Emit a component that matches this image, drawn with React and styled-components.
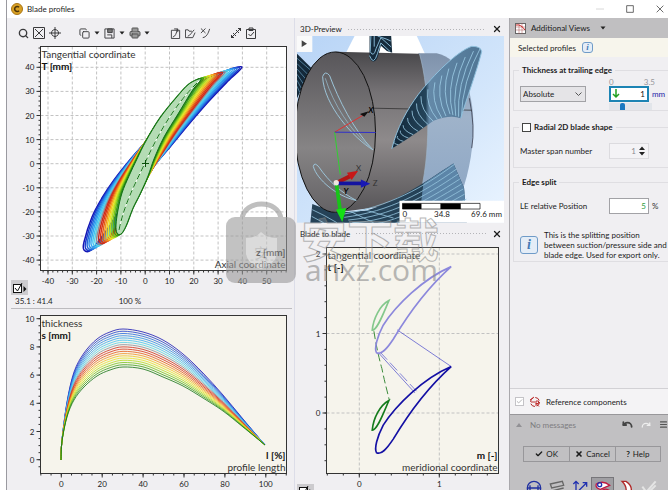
import { useState } from 'react'
import styled, { createGlobalStyle, css } from 'styled-components'
import { Search, Copy, Printer, Check, X, Undo, Redo, Menu } from 'lucide-react'

const GlobalStyle = createGlobalStyle`
  * {
    box-sizing: border-box;
  }
  body {
    margin: 0;
    background: #fff;
    color: #1c1c1c;
    font: 8px/10px Lato, "Open Sans", sans-serif;
  }
  button, input, select {
    font: inherit;
    color: inherit;
    margin: 0;
  }
  svg {
    display: block;
  }
`

/* ---------- window ---------- */

const Window = styled.div`
  position: relative;
  display: flex;
  flex-direction: column;
  height: 100vh;
  margin-left: 6px;
  overflow: hidden;
  border-left: 1px solid #9a9aa0;
`
const TitleBar = styled.header`
  display: flex;
  flex: none;
  align-items: center;
  gap: 4px;
  height: 18px;
  padding: 0 2px 0 4px;
`
const Title = styled.h1`
  flex: 1;
  margin: 0;
  font-size: 8px;
  font-weight: 400;
`
const CaptionButton = styled.button`
  display: grid;
  place-items: center;
  width: 12px;
  height: 16px;
  margin-left: 14px;
  padding: 0;
  border: 0;
  background: none;
  color: ${(p) => (p.$dim ? '#c4c4c4' : '#222')};
`
const Body = styled.main`
  display: grid;
  flex: 1;
  grid-template-columns: minmax(0, 287fr) minmax(0, 215fr) 159px;
  min-height: 0;
  background: #f0eff2;
`
const Column = styled.section`
  min-width: 0;
`
const ViewColumn = styled(Column)`
  padding: 0 5px 0 2px;
  border-left: 1px solid #dcdde8;
`

/* ---------- toolbar ---------- */

const Toolbar = styled.div`
  display: flex;
  align-items: center;
  gap: 15px;
  height: 24px;
  padding: 6px 0 0 8px;
`
const ToolGroup = styled.div`
  display: flex;
`
const Tool = styled.button`
  display: grid;
  place-items: center;
  width: ${(p) => p.$width || 15}px;
  height: 16px;
  padding: 0;
  border: 0;
  background: none;
  color: #3a3a3c;
`
const ChartArea = styled.div`
  position: relative;
`
const ChartSvg = styled.svg`
  width: 100%;
  height: auto;
  font-family: Lato, "Open Sans", sans-serif;
`
const ChartOptions = styled.button`
  position: absolute;
  left: ${(p) => p.$left}px;
  bottom: ${(p) => p.$bottom}px;
  display: grid;
  place-items: center;
  width: 17px;
  height: 15px;
  padding: 0;
  border: 0;
  background: #cccbce;
`
const Status = styled.div`
  display: flex;
  gap: 66px;
  height: 14px;
  margin: 0 2px 0 4px;
  padding: 1px 0 0 4px;
  border-bottom: 1px solid #bcbbbf;
`
const PanelHeader = styled.div`
  display: flex;
  align-items: center;
  gap: 5px;
  height: 18px;
  padding: 4px 2px 0 3px;
`
const Grip = styled.span`
  flex: 1;
  height: 3px;
  background: radial-gradient(circle, #b4b4b8 1px, transparent 1px) 0 0 / 3px 3px;
`
const CloseButton = styled.button`
  display: grid;
  place-items: center;
  width: 11px;
  height: 12px;
  padding: 0;
  border: 0;
  background: none;
`

/* ---------- side panel ---------- */

const Side = styled.aside`
  display: flex;
  flex-direction: column;
  min-height: 0;
  border-left: 1px solid #a9a8ac;
`
const SideHeader = styled.div`
  display: flex;
  flex: none;
  align-items: center;
  gap: 5px;
  height: 20px;
  padding-left: 4px;
  background: #c0bfc1;
`
const Selected = styled.div`
  display: flex;
  flex: none;
  align-items: center;
  gap: 6px;
  height: 19px;
  padding-left: 8px;
  background: #f7f5ec;
`
const Group = styled.fieldset`
  min-width: 0;
  height: ${(p) => p.$height}px;
  margin: ${(p) => p.$top}px 0 0 3px;
  padding: 0 0 0 6px;
  border: 1px solid #dfdee2;
  border-right: 0;
`
const Legend = styled.legend`
  display: flex;
  align-items: center;
  gap: 3px;
  height: 10px;
  margin-left: -1px;
  padding: 0 3px;
  font-weight: 700;
`
const Field = styled.div`
  display: flex;
  align-items: center;
  gap: 3px;
  height: 17px;
  margin-top: ${(p) => p.$top || 0}px;
`
const FieldLabel = styled.label`
  width: 86px;
`
const box = css`
  height: 16px;
  border: 1px solid #a2a2a6;
  border-radius: 0;
  background: #fff;
`
const NumberBox = styled.input`
  ${box}
  width: 40px;
  padding: 0 2px;
  text-align: right;
  color: ${(p) => p.$color || '#111'};
  ${(p) => p.$focused && 'border: 2px solid #1c84b4;'}
  ${(p) => p.$plain && 'border-color: #dcdbdf; background: #f4f3f6; padding-right: 12px;'}
  outline: 0;
`
const Thickness = styled.div`
  display: grid;
  grid-template-columns: 66px 44px 1fr;
  column-gap: 23px;
  margin-top: 3px;
`
const SelectBox = styled.div`
  position: relative;
  margin-top: 8px;
  svg {
    position: absolute;
    top: 6px;
    right: 4px;
  }
`
const Select = styled.select`
  ${box}
  width: 100%;
  padding: 0 2px;
  appearance: none;
  background: #e5e4e7;
`
const Gauge = styled.div`
  display: flex;
  flex-direction: column;
`
const Scale = styled.div`
  display: flex;
  justify-content: space-between;
  width: 46px;
  height: 8px;
  line-height: 8px;
  color: #98979b;
`
const Entry = styled.div`
  position: relative;
  display: flex;
  align-items: center;
  gap: 3px;
  > svg {
    position: absolute;
    top: 3px;
    left: 3px;
  }
`
const Unit = styled.span`
  color: ${(p) => p.$color || '#333'};
`
const Slider = styled.input`
  width: 43px;
  height: 7px;
  margin-top: 1px;
  appearance: none;
  background: #e2e5ea;
  &::-webkit-slider-thumb {
    appearance: none;
    width: 5px;
    height: 7px;
    border-radius: 2px 2px 0 0;
    background: #1a78c0;
  }
`
const Spin = styled.div`
  position: relative;
  svg {
    position: absolute;
    top: 3px;
    right: 4px;
  }
`
const Tick = styled.input`
  appearance: none;
  width: 9px;
  height: 9px;
  border: 1px solid ${(p) => (p.disabled ? '#c4c3c7' : '#444')};
  background: #fff;
`
const LockedTick = styled.span`
  display: grid;
  > * {
    grid-area: 1 / 1;
    place-self: center;
  }
  svg {
    pointer-events: none;
  }
`
const Hint = styled.div`
  display: flex;
  align-items: center;
  gap: 6px;
  margin: 16px 0 0;
  p {
    margin: 0;
    white-space: nowrap;
  }
`
const InfoBadge = styled.span`
  display: grid;
  flex: none;
  place-items: center;
  width: ${(p) => p.$size}px;
  height: ${(p) => p.$size}px;
  border: 1px solid #6f9bc8;
  border-radius: 3px;
  background: #e4edf7;
  color: #4479b4;
  font: italic 700 ${(p) => (p.$size > 12 ? 14 : 9)}px/1 "Liberation Serif", serif;
`
const Reference = styled.label`
  display: flex;
  flex: none;
  align-items: center;
  gap: 5px;
  height: 26px;
  margin-top: auto;
  padding-left: 5px;
  border-top: 1px solid #d2d1d5;
  background: #f4f3f5;
`
const Footer = styled.footer`
  flex: none;
  height: 76px;
  overflow: hidden;
  border-top: 1px solid #98979a;
  background: #c1c0c2;
`
const Messages = styled.div`
  display: flex;
  align-items: center;
  gap: 8px;
  height: 19px;
  padding-left: 6px;
  color: #7d7c7f;
  span {
    flex: 1;
  }
`
const Actions = styled.div`
  display: grid;
  grid-template-columns: 1fr 1fr 1fr;
  margin: 12px 7px 0 13px;
  border: 1px solid #98979a;
`
const Action = styled.button`
  display: flex;
  align-items: center;
  justify-content: center;
  gap: 3px;
  height: 14px;
  padding: 0;
  border: 0;
  background: none;
  & + & {
    border-left: 1px solid #98979a;
  }
`
const Steps = styled.div`
  display: flex;
  margin: 15px 0 0 12px;
`
const Step = styled.button`
  display: grid;
  flex: none;
  place-items: center;
  width: 23px;
  height: 22px;
  padding: 0;
  border: ${(p) => (p.$active ? '1px solid #77767a' : '0')};
  background: ${(p) => (p.$active ? '#a09fa3' : 'none')};
`

/* ---------- overlay mark ---------- */

const Watermark = styled.svg`
  position: absolute;
  top: 200px;
  left: 217px;
  width: 220px;
  height: 90px;
  pointer-events: none;
`

/* ---------- curve helpers ---------- */

const smooth = (pts, closed) => {
  const n = pts.length
  const at = (i) => (closed ? pts[(i + n) % n] : pts[Math.max(0, Math.min(n - 1, i))])
  let d = `M${pts[0]}`
  const last = closed ? n : n - 1
  for (let i = 0; i < last; i++) {
    const [a, b, c, e] = [at(i - 1), at(i), at(i + 1), at(i + 2)]
    d += `C${b[0] + (c[0] - a[0]) / 6},${b[1] + (c[1] - a[1]) / 6} ${c[0] - (e[0] - b[0]) / 6},${c[1] - (e[1] - b[1]) / 6} ${c}`
  }
  return closed ? d + 'Z' : d
}

const blend = (from, to, t) => from.map(([x, y], i) => [x + (to[i][0] - x) * t, y + (to[i][1] - y) * t])

// point on a polyline for t in 0..1
const pointAt = (pts, t) => {
  const pos = t * (pts.length - 1)
  const i = Math.min(pts.length - 2, Math.floor(pos))
  const f = pos - i
  return [pts[i][0] + (pts[i + 1][0] - pts[i][0]) * f, pts[i][1] + (pts[i + 1][1] - pts[i][1]) * f]
}

const range = (from, to, step = 1) => {
  const list = []
  for (let v = from; v <= to + step / 100; v += step) list.push(v)
  return list
}

const COLORS = [
  '#1414b4', '#1c3ccc', '#2468dc', '#2c8ce8', '#34a8f0', '#44c4f0', '#58d0e4',
  '#8c8c98', '#cc2c1c', '#d83418', '#e45c18', '#f09020', '#f0c420', '#e4e428',
  '#b4dc20', '#78c41c', '#3c9c18', '#147414',
]

// outlines start at the leading edge and run up the suction side
const TIP_BLADE = [
  [84, 250], [84, 242], [92, 217], [102, 198], [114, 180], [129, 161], [144, 144], [172, 113],
  [203, 86], [224, 72], [242, 67], [228, 81], [209, 101], [189, 124], [170, 147], [156, 163],
  [143, 180], [124, 204], [104, 234], [91, 250],
]
const HUB_BLADE = [
  [117, 233], [116, 225], [118, 210], [122, 193], [129, 176], [137, 159], [146, 141], [160, 118],
  [176, 98], [189, 84], [201, 79], [192, 91], [178, 114], [164, 137], [154, 159], [148, 176],
  [140, 194], [133, 208], [126, 226], [121, 234],
]
const THICK_MAX = [
  [61, 460], [62, 440], [67, 402], [74, 372], [84, 353], [97, 339], [110, 332], [123, 329],
  [143, 332], [163, 340], [183, 354], [203, 373], [223, 395], [243, 419], [265, 445],
]
const THICK_MIN = [
  [61, 460], [62, 441], [67, 417], [74, 400], [84, 387], [97, 376], [110, 370], [123, 367],
  [143, 369], [163, 377], [183, 386], [203, 398], [223, 411], [243, 427], [265, 445],
]

/* ---------- charts ---------- */

function Axes({ frame, xs, ys, minorX = [], minorY = [], grid, fill }) {
  const [x0, y0, x1, y1] = frame
  return (
    <g fontSize="8" fill="#222">
      <rect x={x0} y={y0} width={x1 - x0} height={y1 - y0} fill={fill} />
      {grid && (
        <g stroke="#c2c2c2" strokeDasharray="3 2">
          {xs.map(([x]) => <path key={x} d={`M${x} ${y0}V${y1}`} />)}
          {ys.map(([y]) => <path key={y} d={`M${x0} ${y}H${x1}`} />)}
        </g>
      )}
      <g stroke="#333">
        {xs.map(([x]) => <path key={x} d={`M${x} ${y1}v4`} />)}
        {ys.map(([y]) => <path key={y} d={`M${x0} ${y}h-4`} />)}
        {minorX.map((x) => <path key={x} d={`M${x} ${y1}v2`} />)}
        {minorY.map((y) => <path key={y} d={`M${x0} ${y}h-2`} />)}
        <rect x={x0} y={y0} width={x1 - x0} height={y1 - y0} fill="none" />
      </g>
      {xs.map(([x, label]) => <text key={x} x={x} y={y1 + 13} textAnchor="middle">{label}</text>)}
      {ys.map(([y, label]) => <text key={y} x={x0 - 6} y={y + 3} textAnchor="end">{label}</text>)}
    </g>
  )
}

function AxisTitles({ frame, yName, yUnit, xName, xUnit }) {
  const [x0, y0, x1, y1] = frame
  return (
    <g fontSize="10" fill="#333">
      <text x={x0 + 1} y={y0 + 11}>{yName}</text>
      <text x={x0 + 1} y={y0 + 23} fontWeight="700" fill="#111">{yUnit}</text>
      <text x={x1 - 1} y={y1 - 15} fontWeight="700" fill="#111" textAnchor="end">{xUnit}</text>
      <text x={x1 - 1} y={y1 - 3} textAnchor="end">{xName}</text>
    </g>
  )
}

function ProfileChart() {
  const frame = [40.5, 46.5, 286.5, 270.5]
  const camber = 'M119 230C124 205 134 186 145 163C158 134 175 104 199 81'
  const x = (v) => 145.2 + v * 2.43
  const y = (v) => 163.7 - v * 2.41
  return (
    <ChartSvg viewBox="7 42 287 253">
      <Axes
        frame={frame}
        grid
        fill="#fff"
        xs={range(-40, 50, 10).map((v) => [x(v), v])}
        ys={range(-40, 40, 10).map((v) => [y(v), v])}
        minorX={range(-42, 58, 2).map(x)}
        minorY={range(-42, 48, 2).map(y)}
      />
      <g fill="none" strokeWidth="1.500">
        {COLORS.map((c, i) => (
          <path key={c} d={smooth(blend(TIP_BLADE, HUB_BLADE, i / (COLORS.length - 1)), true)} stroke={c} />
        ))}
      </g>
      <path d={smooth(HUB_BLADE, true)} fill="#b4dcb4" stroke="#147414" />
      <path d={camber} fill="none" stroke="#fff" />
      <path d={camber} fill="none" stroke="#147414" strokeDasharray="6 3" />
      <path d="M142 163.500h7M145.500 160v7" stroke="#0a500a" />
      <AxisTitles frame={frame} yName="Tangential coordinate" yUnit="T [mm]" xName="Axial coordinate" xUnit="z [mm]" />
    </ChartSvg>
  )
}

function ThicknessChart() {
  const frame = [40.5, 315.5, 286.5, 473.5]
  const x = (v) => 61.3 + v * 2.045
  const y = (v) => 459.7 - v * 14.1
  return (
    <ChartSvg viewBox="7 309 287 181">
      <Axes
        frame={frame}
        fill="#f6f4ec"
        xs={range(0, 100, 20).map((v) => [x(v), v])}
        ys={range(0, 10, 2).map((v) => [y(v), v])}
        minorX={range(-10, 110, 5).map(x)}
        minorY={range(-0.5, 10, 0.5).map(y)}
      />
      <g fill="none" strokeWidth="0.800">
        {COLORS.map((c, i) => (
          <path key={c} d={smooth(blend(THICK_MAX, THICK_MIN, i / (COLORS.length - 1)))} stroke={c} />
        ))}
      </g>
      <AxisTitles frame={frame} yName="thickness" yUnit="s [mm]" xName="profile length" xUnit="l [%]" />
    </ChartSvg>
  )
}

const TIP_OUTLINE = 'M484 434C400 470 318 550 280 610C262 645 252 680 260 693C274 700 290 682 310 652C350 585 410 500 484 434Z'
const HUB_OUTLINE = 'M297 536C270 550 250 590 247 625C262 625 280 575 297 536Z'

function BladeToBladeChart() {
  const frame = [326.5, 247.5, 498.5, 473.5]
  const x = (v) => 359.3 + v * 80
  const y = (v) => 413 - v * 79.5
  return (
    <ChartSvg viewBox="297 241 207 249">
      <Axes
        frame={frame}
        grid
        fill="#f6f4ec"
        xs={[0, 1].map((v) => [x(v), v])}
        ys={[0, 1, 2].map((v) => [y(v), v])}
        minorX={range(-0.4, 1.6, 0.2).map(x)}
        minorY={range(-0.6, 2, 0.2).map(y)}
      />
      <g transform="translate(290 222) scale(.333)" fill="none" strokeWidth="3">
        <path d="M322 324L484 434M265 392L375 513" stroke="#4040c8" strokeWidth="2" />
        <path d="M270 390L380 508" stroke="#4a4acc" strokeWidth="2" strokeDasharray="32 12" />
        <path d="M252 328C258 370 270 420 276 440C284 480 290 500 298 534" stroke="#3c8c3c" strokeDasharray="24 10" />
        <path d={TIP_OUTLINE} stroke="#8c88dc" strokeWidth="5" transform="translate(0 -300)" />
        <path d={HUB_OUTLINE} stroke="#84c88c" strokeWidth="5" transform="translate(0 -300)" />
        <path d={TIP_OUTLINE} stroke="#1410a4" strokeWidth="5" />
        <path d={HUB_OUTLINE} stroke="#147c1c" strokeWidth="5" />
      </g>
      <AxisTitles frame={frame} yName="tangential coordinate" yUnit="t [-]" xName="meridional coordinate" xUnit="m [-]" />
    </ChartSvg>
  )
}

function Preview3D() {
  const upper = [[305, 400], [330, 335], [375, 248], [450, 165], [540, 95]]
  const lower = [[312, 400], [370, 360], [430, 320], [480, 298], [514, 308]]
  return (
    <ChartSvg viewBox="20 63 622 561" role="img" aria-label="Impeller preview">
      <defs>
        <linearGradient id="sky" x1="0" y1="0" x2="1" y2="1">
          <stop offset="0" stopColor="#b8d4f6" />
          <stop offset="0.600" stopColor="#d3e6fb" />
          <stop offset="1" stopColor="#eaf4ff" />
        </linearGradient>
        <linearGradient id="drum" x1="0" y1="0" x2="0" y2="1">
          <stop offset="0" stopColor="#48474a" />
          <stop offset="0.250" stopColor="#757275" />
          <stop offset="0.550" stopColor="#8e8a8b" />
          <stop offset="1" stopColor="#565457" />
        </linearGradient>
        <linearGradient id="face" x1="0" y1="0" x2="0" y2="1">
          <stop offset="0" stopColor="#58565a" />
          <stop offset="0.600" stopColor="#868485" />
          <stop offset="1" stopColor="#646265" />
        </linearGradient>
        <linearGradient id="glass" x1="0" y1="0" x2="0" y2="1">
          <stop offset="0" stopColor="#7f92ab" />
          <stop offset="0.400" stopColor="#9fb3ca" />
          <stop offset="1" stopColor="#8ba5c4" />
        </linearGradient>
        <linearGradient id="blade" x1="0" y1="0" x2="1" y2="0">
          <stop offset="0.100" stopColor="#152c3e" />
          <stop offset="0.380" stopColor="#24445a" />
          <stop offset="0.420" stopColor="#6489a8" />
          <stop offset="1" stopColor="#4f7594" />
        </linearGradient>
        <clipPath id="bladeClip">
          <path d="M305 402C320 340 350 285 385 238C430 180 500 110 545 94Q573 94 575 110C560 170 530 250 512 310Q480 298 430 318C385 350 350 375 305 402Z" />
        </clipPath>
      </defs>
      <rect x="20" y="63" width="622" height="561" fill="url(#sky)" />
      <path d="M193 63H380L405 118H165Z" fill="#fff" />
      <path d="M20 116L64 160L20 250Z" fill="#14293a" />
      <path d="M20 130L60 165M20 146L52 178M20 162L46 192M20 178L40 208M20 196L34 222M20 214L28 232" stroke="#6ea4c6" strokeWidth="2" />

      <path d="M385 115H440C510 130 550 220 550 330C550 420 530 500 505 560L380 590Z" fill="url(#glass)" />
      <path d="M538 250Q556 340 545 400" fill="none" stroke="#223" strokeWidth="2" />
      <path d="M135 110L388 116C420 230 424 420 385 560L135 594Z" fill="url(#drum)" />
      <path d="M250 280L545 286" stroke="#222" strokeWidth="2" />
      <path d="M388 116C420 230 424 420 385 560" fill="none" stroke="#9fb6cc" strokeWidth="2" />

      <path d="M60 624L66 568L135 594L225 588C310 566 400 505 490 446L522 520L530 624Z" fill="#254257" />
      <path d="M400 506L490 446L522 520L530 624H385Z" fill="#5c85a8" />
      <g stroke="#94c2dc" strokeWidth="2.500" fill="none">
        {range(0, 8).map((i) => (
          <path key={i} d={`M${150 + i * 12} ${600 + i * 8}C300 ${575 + i * 15} 400 ${518 + i * 15} ${494 + i * 5} ${448 + i * 15}`} />
        ))}
        <path d="M66 585Q100 600 140 624M64 605L100 624M180 590L250 624M225 586L310 610" />
      </g>

      <ellipse cx="135" cy="352" rx="121" ry="241" fill="url(#face)" stroke="#111" strokeWidth="3" />
      <g fill="none" stroke="#9cc4d8" strokeWidth="3">
        <path d="M97 185Q104 165 118 182C145 255 190 345 248 405C190 370 100 270 97 185Z" />
        <path d="M105 190C130 270 180 345 238 396" strokeWidth="2" />
        <path d="M198 557C140 545 80 495 69 455Q72 440 86 457C115 500 155 535 198 557Z" />
      </g>

      <path d="M238 63H303L306 113L290 108L272 92L262 128Q250 150 238 130Z" fill="#152b3c" />
      <path d="M238 122Q250 155 262 115L272 84L300 110M242 63L240 110Q250 130 258 100L272 68L303 96M252 63V95M262 63L288 72L302 78" fill="none" stroke="#82b4d0" strokeWidth="3" />

      <g clipPath="url(#bladeClip)">
        <rect x="300" y="90" width="280" height="320" fill="url(#blade)" />
        <g stroke="#9ccbe4" strokeWidth="2.500" fill="none">
          {range(0, 16).map((i) => {
            const t = i / 16
            const [a, b] = [pointAt(upper, t), pointAt(lower, t)]
            return <path key={i} d={`M${b}Q${(a[0] + b[0]) / 2 - 12} ${(a[1] + b[1]) / 2} ${a[0] + 35 * t} ${a[1] - 4}`} />
          })}
        </g>
      </g>
      <path d="M305 402C320 340 350 285 385 238C430 180 500 110 545 94Q573 94 575 110C560 170 530 250 512 310" fill="none" stroke="#8fc0dc" strokeWidth="3" />

      <path d="M133 352L222 299" stroke="#e03030" strokeWidth="3" />
      <path d="M133 352L256 353" stroke="#3030c8" strokeWidth="3" />
      <path d="M133 352L150 480" stroke="#30d030" strokeWidth="3" />
      <path d="M214 298L230 293L222 303Z" fill="#111" stroke="#111" strokeWidth="4" />
      <path d="M138 505L180 484" stroke="#b01414" strokeWidth="12" />
      <path d="M170 474L204 468L184 496Z" fill="#c81818" />
      <path d="M140 506H214" stroke="#1414a0" strokeWidth="11" />
      <path d="M212 494L240 507L212 519Z" fill="#1818b4" />
      <path d="M139 510L150 590" stroke="#18c418" strokeWidth="11" />
      <path d="M137 584L168 580L156 622Z" fill="#14e014" />
      <circle cx="138" cy="504" r="8" fill="#eee4e0" />
      <g fontSize="24" fill="#333">
        <text x="197" y="470">X</text>
        <text x="248" y="514">Z</text>
        <text x="234" y="293" fontWeight="700" fontStyle="italic" fill="#000">X</text>
        <text x="160" y="538" fontWeight="700" fontStyle="italic" fill="#000">Y</text>
      </g>

      <rect x="20" y="63" width="46" height="48" fill="#fafafa" />
      <path d="M34 76L50 86L34 96Z" fill="#444" />
      <path d="M328 558H642V624H328Z" fill="#fff" />
      <path d="M337 566H570V583H337Z" fill="#fff" stroke="#000" strokeWidth="2" />
      <path d="M337 566h57v17h-57zM451 566h61v17h-61z" />
      <g fontSize="24" fill="#222">
        <text x="337" y="606">0</text>
        <text x="432" y="606">34.8</text>
        <text x="636" y="606" textAnchor="end">69.6 mm</text>
      </g>
    </ChartSvg>
  )
}

/* ---------- small icons ---------- */

const Icon = ({ d, size = 12, children }) => (
  <svg width={size} height={size} viewBox="0 0 12 12" fill="none" stroke="currentColor">
    {d && <path d={d} />}
    {children}
  </svg>
)

const Caret = () => (
  <svg width="6" height="4" viewBox="0 0 6 4"><path d="M0.500 0.500H5.500L3 3.500Z" fill="#222" /></svg>
)

const OptionsIcon = () => (
  <svg width="14" height="12" viewBox="0 0 14 12" fill="none" stroke="#111">
    <rect x="0.500" y="2.500" width="8" height="8" fill="#fff" />
    <path d="M2 6L4.500 9L9 1" />
    <path d="M10.500 4L13.500 7L10.500 10Z" fill="#111" stroke="none" />
  </svg>
)

const Close = () => <X size={10} strokeWidth={3} />

function ProfileToolbar() {
  return (
    <Toolbar>
      <ToolGroup>
        <Tool $width={16} aria-label="Zoom"><Search size={11} strokeWidth={3} /></Tool>
        <Tool $width={16} aria-label="Fit view"><Icon d="M.5.5h11v11H.5ZM2 2l8 8M10 2L2 10" /></Tool>
        <Tool $width={16} aria-label="Center"><Icon d="M6 0v12M0 6h12M6 2.500a3.500 3.500 0 1 0 .01 0" /></Tool>
      </ToolGroup>
      <ToolGroup>
        <Tool $width={13} aria-label="Copy"><Copy size={11} /></Tool>
        <Tool $width={12} aria-label="Copy options"><Caret /></Tool>
        <Tool $width={13} aria-label="Save"><Icon size={11} d="M1 1h10v10H1ZM3.500 7.500h5V11"><path d="M4 1h5v4H4Z" fill="#777" /></Icon></Tool>
        <Tool $width={12} aria-label="Save options"><Caret /></Tool>
        <Tool $width={13} aria-label="Print"><Printer size={12} strokeWidth={2} color="#555" fill="#999" /></Tool>
        <Tool $width={12} aria-label="Print options"><Caret /></Tool>
      </ToolGroup>
      <ToolGroup>
        <Tool aria-label="New polyline"><Icon size={11} d="M1.500 2.500h9v9h-9ZM3 10C6 9 7 6 8 1M4.500 1h4v3.500" /></Tool>
        <Tool aria-label="Open polyline"><Icon size={11} d="M.5 10.500V2h3l1 1.500h3M.5 10.500h8L11 5M3 9C6 8 7 5 10 2" /></Tool>
        <Tool aria-label="Remove polyline"><Icon size={11} d="M1 .5l5 5M6 .5l-5 5M3 10.500C7 10 9 6 10.500 1" /></Tool>
      </ToolGroup>
      <ToolGroup>
        <Tool aria-label="Measure"><Icon d="M1 11L11 1M3 6l3 3M6 3l3 3M8 1.500h2.500V4M1.500 8v2.500H4" /></Tool>
        <Tool aria-label="Report"><Icon d="M1.500 2.500h9v9h-9ZM4 1h4v2.500H4ZM3.500 7l2 2L9 5" /></Tool>
      </ToolGroup>
    </Toolbar>
  )
}

function SidePanel() {
  const [mode, setMode] = useState('Absolute')
  const [thickness, setThickness] = useState('1')
  const [radial, setRadial] = useState(false)
  const [split, setSplit] = useState('5')

  return (
    <Side>
      <SideHeader>
        <Icon>
          <rect x="1.500" y="1.500" width="10" height="10" fill="#fff" stroke="#666" />
          <path d="M1 5h10M1 8h10M5 1v11M8 1v11" stroke="#a55" strokeWidth=".5" />
          <path d="M2 3q5-1 9 5" stroke="#c22" />
        </Icon>
        <span>Additional Views</span>
        <Tool aria-label="More views"><Caret /></Tool>
      </SideHeader>
      <Selected>
        Selected profiles
        <InfoBadge $size={11}>i</InfoBadge>
      </Selected>

      <Group $top={8} $height={46}>
        <Legend>Thickness at trailing edge</Legend>
        <Thickness>
          <SelectBox>
            <Select aria-label="Thickness mode" value={mode} onChange={(e) => setMode(e.target.value)}>
              <option>Absolute</option>
              <option>Relative</option>
            </Select>
            <svg width="7" height="4" viewBox="0 0 7 4"><path d="M.5.5L3.500 3.500L6.500.5" fill="none" stroke="#555" /></svg>
          </SelectBox>
          <Gauge>
            <Scale><span>0</span><span>3.5</span></Scale>
            <Entry>
              <NumberBox $focused aria-label="Thickness" value={thickness} onChange={(e) => setThickness(e.target.value)} />
              <svg width="8" height="10" viewBox="0 0 8 10"><path d="M4 0V8M1 5L4 8L7 5" fill="none" stroke="#22a022" strokeWidth="1.500" /></svg>
              <Unit $color="#2424a8">mm</Unit>
            </Entry>
            <Slider
              type="range"
              min="0"
              max="3.5"
              step="0.1"
              aria-label="Thickness slider"
              value={thickness}
              onChange={(e) => setThickness(e.target.value)}
            />
          </Gauge>
        </Thickness>
      </Group>

      <Group $top={11} $height={46}>
        <Legend>
          <Tick type="checkbox" id="radial" checked={radial} onChange={() => setRadial(!radial)} />
          <label htmlFor="radial">Radial 2D blade shape</label>
        </Legend>
        <Field $top={10}>
          <FieldLabel htmlFor="span">Master span number</FieldLabel>
          <Spin>
            <NumberBox $plain $color="#8c8b8f" id="span" value="1" readOnly />
            <svg width="6" height="10" viewBox="0 0 6 10"><path d="M0 4L3 .5L6 4ZM0 6L3 9.500L6 6Z" fill="#222" /></svg>
          </Spin>
        </Field>
      </Group>

      <Group $top={9} $height={85}>
        <Legend>Edge split</Legend>
        <Field $top={10}>
          <FieldLabel htmlFor="split">LE relative Position</FieldLabel>
          <NumberBox $color="#2c9c3c" id="split" value={split} onChange={(e) => setSplit(e.target.value)} />
          <Unit>%</Unit>
        </Field>
        <Hint>
          <InfoBadge $size={18}>i</InfoBadge>
          <p>
            This is the splitting position<br />
            between suction/pressure side and<br />
            blade edge. Used for export only.
          </p>
        </Hint>
      </Group>

      <Reference>
        <LockedTick>
          <Tick type="checkbox" checked disabled readOnly />
          <Check size={7} strokeWidth={3} color="#aaa9ad" />
        </LockedTick>
        <Icon>
          <circle cx="6" cy="6" r="4.500" stroke="#b02020" strokeDasharray="5 2" />
          <path d="M1 4l4-3M7 10V5h2.500v2.500H7l3 3M2 6h4" stroke="#c03030" />
        </Icon>
        Reference components
      </Reference>

      <Footer>
        <Messages>
          <svg width="6" height="4" viewBox="0 0 6 4"><path d="M0 4L3 0L6 4Z" fill="#929195" /></svg>
          <span>No messages</span>
          <Undo size={11} strokeWidth={4} color="#444" />
          <Redo size={10} strokeWidth={3} color="#eee" />
          <Menu size={9} strokeWidth={3} color="#555" />
        </Messages>
        <Actions>
          <Action><Check size={8} strokeWidth={4} />OK</Action>
          <Action><X size={8} strokeWidth={5} />Cancel</Action>
          <Action><b>?</b>Help</Action>
        </Actions>
        <Steps>
          <Step aria-label="Main dimensions">
            <Icon size={16}><circle cx="6" cy="6" r="5" stroke="#2030a0" /><path d="M1 6h10M3 4v4M9 4v4" stroke="#2030a0" /></Icon>
          </Step>
          <Step aria-label="Meridional contour">
            <Icon size={16}><path d="M1 3L10 1L11 4L2 6ZM3 8L11 6M2 11L11 9" stroke="#666" /></Icon>
          </Step>
          <Step aria-label="Blade properties">
            <Icon size={16}><path d="M1 3L3 1L5 3M3 1V10L11 2M8 2h3v3" stroke="#2030b0" /></Icon>
          </Step>
          <Step $active aria-label="Blade profiles">
            <Icon size={16}>
              <path d="M1 3Q6 0 11 4L4 7Q0 6 1 3Z" fill="#fff" stroke="#c01840" />
              <circle cx="3.500" cy="3.500" r="1.500" stroke="#2030b0" />
              <path d="M3 10Q7 5 11 8" stroke="#c01840" />
            </Icon>
          </Step>
          <Step aria-label="Blade edges">
            <Icon size={16}><path d="M3 1h3q6 4 3 10H5q3-5-2-10Z" fill="#fff" stroke="#b02828" /></Icon>
          </Step>
          <Step aria-label="Finish">
            <Icon size={16}><path d="M1 5l3 4L11 1M4 11L11 4" stroke="#e4e4e4" strokeWidth="1.500" /></Icon>
          </Step>
        </Steps>
      </Footer>
    </Side>
  )
}

function App() {
  return (
    <>
      <GlobalStyle />
      <Window>
        <TitleBar>
          <svg width="12" height="12" viewBox="0 0 12 12">
            <circle cx="6" cy="6" r="5.500" fill="#d8a024" stroke="#a87414" />
            <path d="M8 4.300A2.500 2.500 0 1 0 8 7.700" fill="none" stroke="#4c3408" strokeWidth="1.600" />
          </svg>
          <Title>Blade profiles</Title>
          <CaptionButton $dim aria-label="Minimize"><Icon size={8} d="M0 6h12" /></CaptionButton>
          <CaptionButton aria-label="Maximize"><Icon size={8} d="M1 1h10v10H1Z" /></CaptionButton>
          <CaptionButton aria-label="Close"><Icon size={8} d="M1 1l10 10M11 1L1 11" /></CaptionButton>
        </TitleBar>
        <Body>
          <Column>
            <ProfileToolbar />
            <ChartArea>
              <ProfileChart />
              <ChartOptions $left={4} $bottom={0} aria-label="Chart options"><OptionsIcon /></ChartOptions>
            </ChartArea>
            <Status>
              <span>35.1 : 41.4</span>
              <span>100 %</span>
            </Status>
            <ThicknessChart />
          </Column>
          <ViewColumn>
            <PanelHeader>
              3D-Preview
              <Grip />
              <CloseButton aria-label="Close preview"><Close /></CloseButton>
            </PanelHeader>
            <Preview3D />
            <PanelHeader>
              Blade to blade
              <Grip />
              <CloseButton aria-label="Close blade to blade"><Close /></CloseButton>
            </PanelHeader>
            <ChartArea>
              <BladeToBladeChart />
              <ChartOptions $left={0} $bottom={-9} aria-label="Chart options"><OptionsIcon /></ChartOptions>
            </ChartArea>
          </ViewColumn>
          <SidePanel />
        </Body>
        <Watermark viewBox="224 200 220 90" opacity="0.600">
          <path d="M242 219C244 199 279 199 281 219" fill="none" stroke="#959595" strokeWidth="5" />
          <rect x="226" y="217" width="70" height="66" rx="9" fill="#9a9a9a" />
          <path d="M246 238Q256 238 261 232Q267 238 277 238V254Q275 264 261 269Q248 264 246 254Z" fill="#c4c4c4" />
          <text x="254" y="258" fontSize="14" fontFamily="Noto Sans CJK SC, sans-serif" fill="#9a9a9a">安</text>
          <g fontSize="46" fontFamily="Noto Sans CJK SC, sans-serif" fontWeight="700" fill="#fff" fillOpacity="0.300" stroke="#8c8c8c">
            <text x="301" y="257">安</text>
            <text x="347" y="257">下</text>
            <text x="393" y="257">载</text>
          </g>
          <text x="305" y="281" fontSize="30" fontFamily="Open Sans, sans-serif" fill="#8c8c8c">anxz.com</text>
        </Watermark>
      </Window>
    </>
  )
}

export default App
